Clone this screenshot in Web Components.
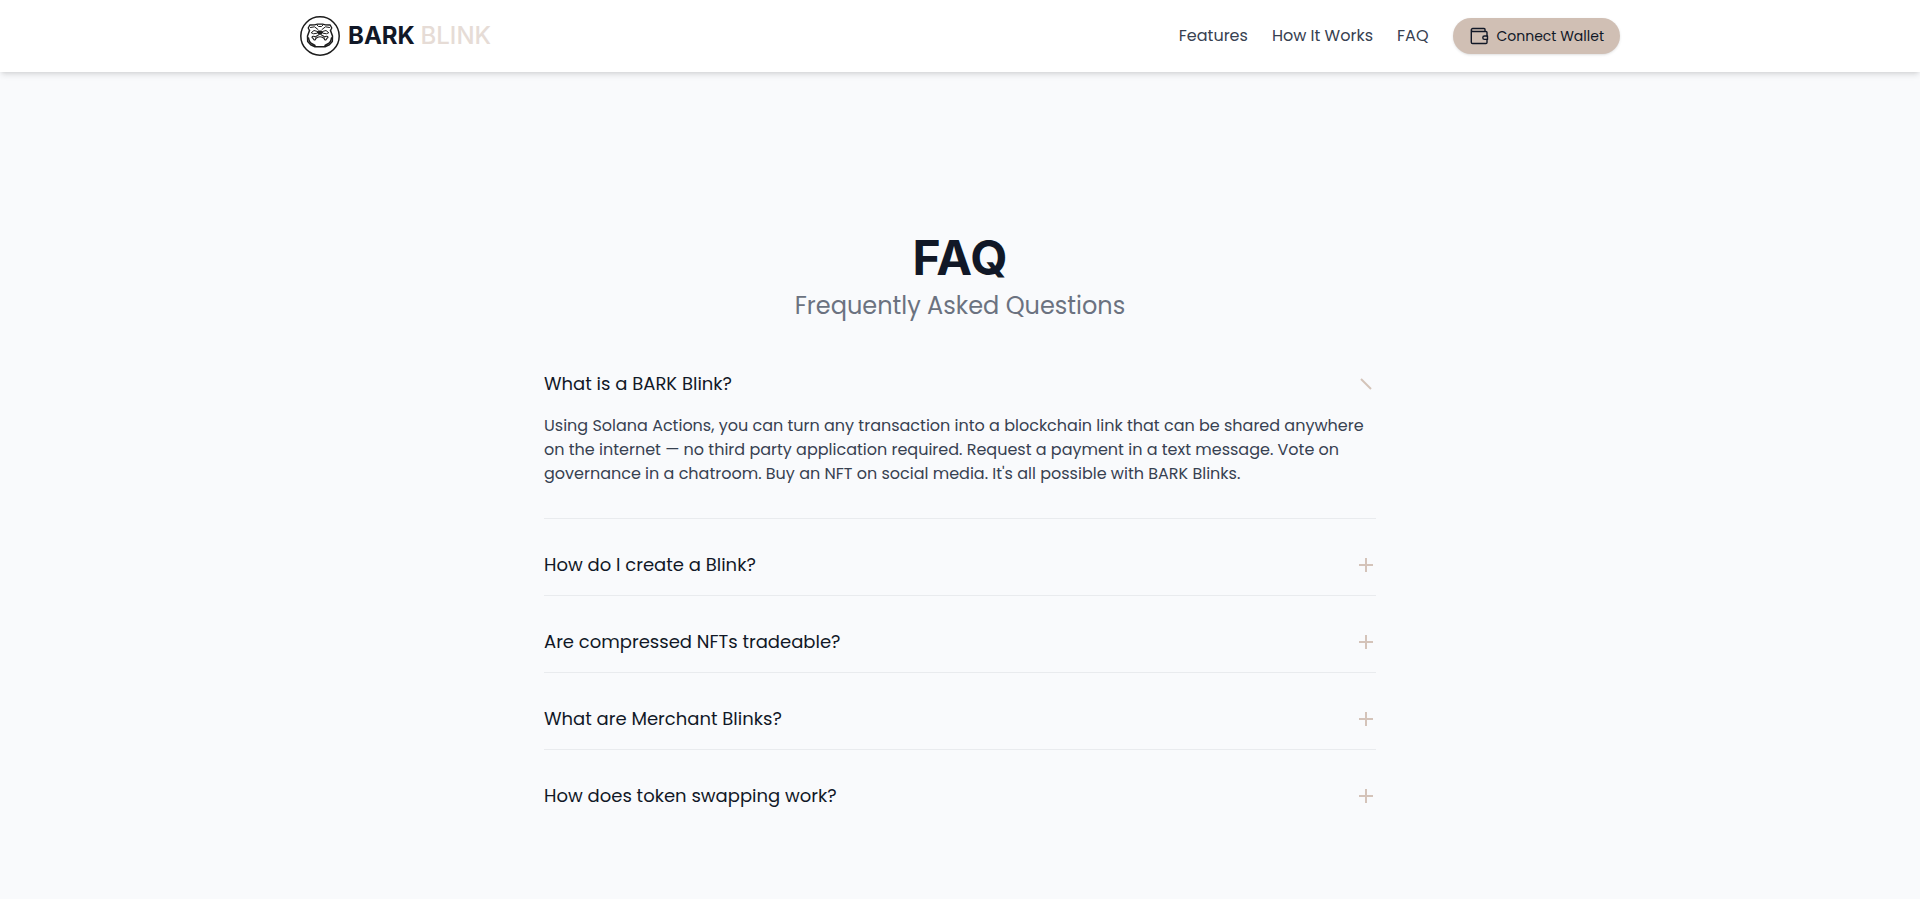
<!DOCTYPE html>
<html lang="en">
<head>
<meta charset="utf-8">
<meta name="viewport" content="width=device-width, initial-scale=1">
<title>BARK Blink – FAQ</title>
<style>
  body {
    margin: 0;
    min-height: 100vh;
    background: #f9fafc;
    color: #111827;
    font-family: Poppins, Inter, sans-serif;
    font-size: 16px;
    line-height: 24px;
    --sand: #d0bfb4;
    --sand-light: #e6dcd6;
    --heading-font: Inter, sans-serif;
  }
</style>
</head>
<body>
<site-header>
  <brand-logo slot="brand"></brand-logo>
  <nav-link href="#features">Features</nav-link>
  <nav-link href="#how-it-works">How It Works</nav-link>
  <nav-link href="#faq">FAQ</nav-link>
  <wallet-button>Connect Wallet</wallet-button>
</site-header>
<faq-section id="faq">
  <span slot="title">FAQ</span>
  <span slot="subtitle">Frequently Asked Questions</span>
  <faq-item open>
    <span slot="question">What is a BARK Blink?</span>
    Using Solana Actions, you can turn any transaction into a blockchain link that can be shared anywhere on the internet — no third party application required. Request a payment in a text message. Vote on governance in a chatroom. Buy an NFT on social media. It's all possible with BARK Blinks.
  </faq-item>
  <faq-item><span slot="question">How do I create a Blink?</span></faq-item>
  <faq-item><span slot="question">Are compressed NFTs tradeable?</span></faq-item>
  <faq-item><span slot="question">What are Merchant Blinks?</span></faq-item>
  <faq-item><span slot="question">How does token swapping work?</span></faq-item>
</faq-section>

<script>
class BaseElement extends HTMLElement {
  constructor() {
    super();
    this.attachShadow({ mode: 'open' }).innerHTML = this.constructor.markup;
  }
}

customElements.define('site-header', class extends BaseElement {
  static markup = `
    <style>
      :host { display: block; background: #fff; box-shadow: 0 4px 6px -1px rgb(0 0 0 / .1), 0 2px 4px -2px rgb(0 0 0 / .1); }
      .bar { display: flex; align-items: center; justify-content: space-between; box-sizing: border-box;
             max-width: 1400px; min-height: 72px; margin: 0 auto; padding: 16px 40px; }
      nav { display: flex; align-items: center; gap: 24px; }
    </style>
    <header class="bar"><slot name="brand"></slot><nav><slot></slot></nav></header>`;
});

customElements.define('brand-logo', class extends BaseElement {
  static markup = `
    <style>
      :host { display: block; }
      a { display: flex; align-items: center; gap: 8px; color: #111827; text-decoration: none;
          font: 700 24px/32px var(--heading-font); }
      span { color: var(--sand-light); font-weight: 500; }
      svg { display: block; }
    </style>
    <a href="#">
      <svg width="40" height="40" viewBox="0 0 40 40" fill="none" stroke="#1c1c1c" stroke-linecap="round" stroke-linejoin="round" aria-hidden="true">
        <circle cx="20" cy="20" r="19.2" stroke-width="1.5"/>
        <path d="M9.5 14.5 8.2 12l1.6-3 4.7-.2 3-.6h5l3 .6 4.7.2 1.6 3-1.3 2.500" stroke-width="1.3"/>
        <path d="M17 9l1.5 1.5h3L23 9M10.5 11.500l4-.7 3.5 2.7M29.5 11.500l-4-.7-3.5 2.7" stroke-width="1"/>
        <path d="M9.5 14.5 7.5 20l.2 5.5 3 3.300 4.300 2h10l4.300-2 3-3.300.2-5.500-2-5.500" stroke-width="1.5"/>
        <path d="M11.5 16.5l2.5-2 3.500 1v1.600l-3.500.6zM28.5 16.5l-2.500-2-3.500 1v1.600l3.500.6z" stroke-width="1"/>
        <path d="M18.3 15h3.400l.4 1.700-.9 1.500h-2.400l-.9-1.500z" fill="#1c1c1c" stroke-width="1"/>
        <path d="M18.5 18.800c-1 1-2.200 1-3 2.200-1.800-1.300-3.500-.8-3.500.6 1.300.2 1.300 1.400 2 2.200.9.500 1.800-.2 1.700-1.300 1.100-1 2.600-1.700 4.300-1.700s3.200.7 4.300 1.700c-.1 1.100.8 1.800 1.700 1.300.7-.8.7-2 2-2.200 0-1.400-1.700-1.900-3.500-.6-.8-1.200-2-1.200-3-2.200" stroke-width="1.1"/>
        <path d="M8.500 22c.5 2 .5 4 2.500 5.200l4 2.300M31.500 22c-.5 2-.5 4-2.500 5.200l-4 2.300" stroke-width="1.5"/>
      </svg>
      <div>BARK <span>BLINK</span></div>
    </a>`;
});

customElements.define('nav-link', class extends BaseElement {
  static markup = `
    <style>
      :host { display: block; }
      a { color: #374151; text-decoration: none; }
      a:hover { color: #111827; }
    </style>
    <a><slot></slot></a>`;
  connectedCallback() {
    this.shadowRoot.querySelector('a').href = this.getAttribute('href');
  }
});

customElements.define('wallet-button', class extends BaseElement {
  static markup = `
    <style>
      :host { display: block; }
      button { display: flex; align-items: center; gap: 8px; height: 36px; padding: 0 16px; border: 0; border-radius: 18px;
               background: var(--sand); color: #111827; font: inherit; font-size: 14px; line-height: 20px; cursor: pointer;
               box-shadow: 0 1px 3px rgb(0 0 0 / .1), 0 1px 2px -1px rgb(0 0 0 / .1); }
    </style>
    <button type="button">
      <svg width="20" height="20" viewBox="0 0 20 20" fill="none" stroke="#111827" stroke-width="1.4" stroke-linecap="round" stroke-linejoin="round" aria-hidden="true">
        <path d="M16 5.500V3.500a1 1 0 0 0-1-1H3.800a1.500 1.500 0 0 0 0 3H17a1 1 0 0 1 1 1v3.500M2.300 4v12.200a1.300 1.300 0 0 0 1.300 1.300H17a1 1 0 0 0 1-1v-3"/>
        <path d="M18.500 10h-3a1.700 1.700 0 0 0 0 3.400h3z"/>
      </svg>
      <slot></slot>
    </button>`;
});

customElements.define('faq-section', class extends BaseElement {
  static markup = `
    <style>
      :host { display: block; box-sizing: border-box; max-width: 896px; margin: 0 auto; padding: 162px 32px 64px; }
      h1 { margin: 0 0 8px; text-align: center; font: 700 48px/48px var(--heading-font); }
      p { margin: 0 0 48px; text-align: center; color: #6b7280; font-size: 24px; line-height: 32px; }
      .list { display: grid; gap: 32px; }
    </style>
    <h1><slot name="title"></slot></h1>
    <p><slot name="subtitle"></slot></p>
    <div class="list"><slot></slot></div>`;
});

customElements.define('faq-item', class extends BaseElement {
  static markup = `
    <style>
      :host { display: block; padding-bottom: 16px; border-bottom: 1px solid #e9ebee; }
      :host(:last-of-type) { border-bottom: 0; }
      h2 { margin: 0; font: inherit; }
      button { display: flex; align-items: center; justify-content: space-between; width: 100%; padding: 0; border: 0;
               background: none; color: #111827; font: inherit; font-size: 18px; line-height: 28px; text-align: left; cursor: pointer; }
      svg { flex: none; color: #d4c3b9; }
      .dash, .answer { display: none; }
      :host([open]) .plus { display: none; }
      :host([open]) .dash { display: inline; }
      :host([open]) .answer { display: block; padding: 16px 0; color: #374151; }
    </style>
    <h2><button type="button" aria-controls="answer">
      <slot name="question"></slot>
      <svg width="20" height="20" viewBox="0 0 20 20" fill="none" stroke="currentColor" stroke-width="2" aria-hidden="true">
        <path class="plus" d="M10 3v14M3 10h14"/>
        <path class="dash" d="M5 5l10 10"/>
      </svg>
    </button></h2>
    <div class="answer" id="answer"><slot></slot></div>`;
  static observedAttributes = ['open'];
  connectedCallback() {
    this.button = this.shadowRoot.querySelector('button');
    this.button.addEventListener('click', () => this.toggleAttribute('open'));
    this.sync();
  }
  attributeChangedCallback() { this.sync(); }
  sync() { this.button?.setAttribute('aria-expanded', this.hasAttribute('open')); }
});
</script>
</body>
</html>
